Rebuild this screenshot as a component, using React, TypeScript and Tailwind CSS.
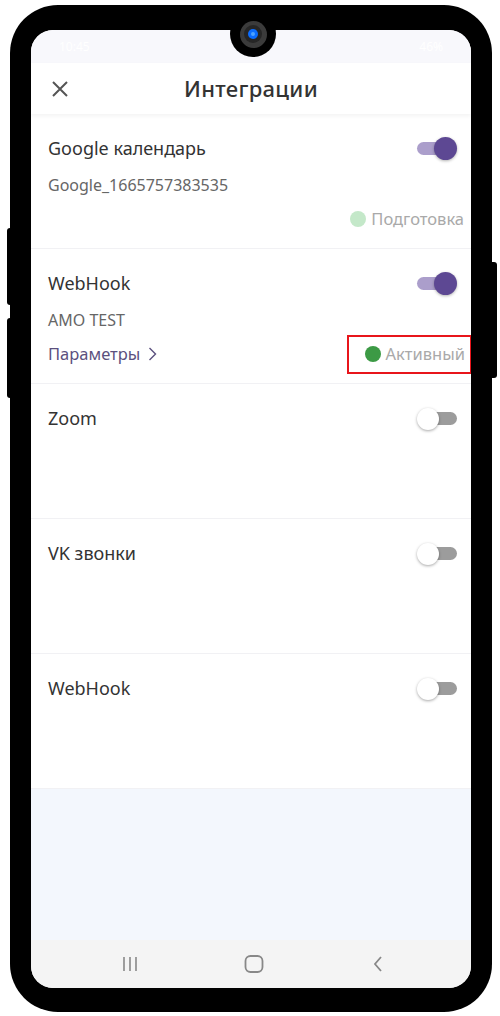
import React from "react";

type Item = {
  title: string;
  on: boolean;
  sub?: string;
  link?: boolean;
  status?: { label: string; dot: string; boxed?: boolean };
};

const items: Item[] = [
  {
    title: "Google календарь",
    on: true,
    sub: "Google_1665757383535",
    status: { label: "Подготовка", dot: "bg-[#c4e8c9]" },
  },
  {
    title: "WebHook",
    on: true,
    sub: "AMO TEST",
    link: true,
    status: { label: "Активный", dot: "bg-[#3c9a45]", boxed: true },
  },
  { title: "Zoom", on: false },
  { title: "VK звонки", on: false },
  { title: "WebHook", on: false },
];

function Toggle({ on }: { on: boolean }) {
  return (
    <div className="relative w-[40px] h-[23px]">
      <div
        className={
          on
            ? "absolute left-0 top-[5px] w-[36px] h-[13px] rounded-full bg-[#ab9ecb]"
            : "absolute left-[4px] top-[5px] w-[36px] h-[13px] rounded-full bg-[#9c9c9c]"
        }
      />
      <div
        className={
          on
            ? "absolute right-0 top-0 w-[23px] h-[23px] rounded-full bg-[#5d4893] shadow-[0_1px_3px_rgba(0,0,0,0.3)]"
            : "absolute left-0 top-[1px] w-[22px] h-[22px] rounded-full bg-white shadow-[0_1px_3px_rgba(0,0,0,0.35)]"
        }
      />
    </div>
  );
}

function Row({ item }: { item: Item }) {
  return (
    <div className="h-[135px] border-b border-[#f1f1f4] pt-[22px] pl-[17px] flex flex-col">
      <div className="flex items-center justify-between pr-[14px] h-[24px]">
        <span className="text-[18px] leading-[24px] text-[#333]">{item.title}</span>
        <Toggle on={item.on} />
      </div>
      {item.sub && (
        <div className="mt-[14px] text-[16px] leading-[22px] text-[#666]">{item.sub}</div>
      )}
      {item.status && (
        <div className="mt-[12px] flex items-center justify-between h-[22px]">
          {item.link ? (
            <span className="flex items-center gap-[8px] text-[16.5px] text-[#5b507e]">
              Параметры
              <svg width="9" height="16" viewBox="0 0 9 16" fill="none">
                <path d="M1.5 2l6 6-6 6" stroke="#5b507e" strokeWidth="1.4" />
              </svg>
            </span>
          ) : (
            <span />
          )}
          <div
            className={
              item.status.boxed
                ? "flex items-center gap-[5px] pl-[16px] pr-[5px] h-[39px] border-2 border-[#e8151b] -mr-[1px]"
                : "flex items-center gap-[5px] pr-[7px]"
            }
          >
            <span className={`w-[16px] h-[16px] rounded-full ${item.status.dot}`} />
            <span className="text-[16.5px] leading-[22px] text-[#a9a9a9]">{item.status.label}</span>
          </div>
        </div>
      )}
    </div>
  );
}

export default function App() {
  return (
    <div
      className="relative w-[500px] h-[1016px] bg-white overflow-hidden"
      style={{ fontFamily: '"Noto Sans", "Open Sans", sans-serif' }}
    >
      {/* side buttons */}
      <div className="absolute left-[7px] top-[228px] w-[8px] h-[77px] rounded-[3px] bg-black" />
      <div className="absolute left-[7px] top-[318px] w-[8px] h-[80px] rounded-[3px] bg-black" />
      <div className="absolute left-[488px] top-[262px] w-[9px] h-[116px] rounded-[3px] bg-black" />

      <div className="ml-[10px] mt-[5px] w-[482px] h-[1007px] rounded-[48px] bg-black pt-[25px] pb-[24px] px-[21px]">
        <div className="w-full h-full rounded-[22px] overflow-hidden bg-white flex flex-col">
          {/* status bar */}
          <div className="h-[33px] bg-[#f8f8fc] flex items-center justify-between px-[28px] text-[12px] text-white">
            <span>10:45</span>
            <span>46%</span>
          </div>

          {/* header */}
          <div className="relative h-[51px] flex items-center justify-center shadow-[0_2px_4px_rgba(0,0,0,0.05)] z-10">
            <svg
              className="absolute left-[21px] top-[18px]"
              width="16"
              height="16"
              viewBox="0 0 16 16"
              fill="none"
            >
              <path d="M1 1l14 14M15 1L1 15" stroke="#555" strokeWidth="2" />
            </svg>
            <span className="text-[22px] font-medium text-[#333] tracking-[0.3px]">Интеграции</span>
          </div>

          {items.map((item, i) => (
            <Row key={i} item={item} />
          ))}

          <div className="flex-1 bg-[#f3f7fd]" />

          {/* nav bar */}
          <div className="h-[48px] bg-[#f4f4f4] flex items-center pl-[79px] gap-[84px]">
            <div className="w-[40px] flex justify-center">
              <svg width="16" height="16" viewBox="0 0 16 16">
                <path d="M2 1v14M8 1v14M14 1v14" stroke="#888" strokeWidth="1.6" />
              </svg>
            </div>
            <div className="w-[40px] flex justify-center">
              <svg width="20" height="18" viewBox="0 0 20 18" fill="none">
                <rect x="1.5" y="1" width="17" height="16" rx="5" stroke="#888" strokeWidth="1.8" />
              </svg>
            </div>
            <div className="w-[40px] flex justify-center">
              <svg width="12" height="18" viewBox="0 0 12 18" fill="none">
                <path d="M9 2L3 9l6 7" stroke="#888" strokeWidth="1.8" />
              </svg>
            </div>
          </div>
        </div>
      </div>

      {/* camera notch */}
      <div className="absolute left-[230px] top-[11px] w-[46px] h-[46px] rounded-full bg-black flex items-center justify-center">
        <div className="w-[27px] h-[27px] rounded-full bg-[#3b3b3b] flex items-center justify-center">
          <div className="w-[18px] h-[18px] rounded-full bg-[#262626] flex items-center justify-center">
            <div className="w-[10px] h-[10px] rounded-full bg-[#0a6cff] flex items-center justify-center">
              <div className="w-[4px] h-[4px] rounded-full bg-[#4da3ff]" />
            </div>
          </div>
        </div>
      </div>
    </div>
  );
}
